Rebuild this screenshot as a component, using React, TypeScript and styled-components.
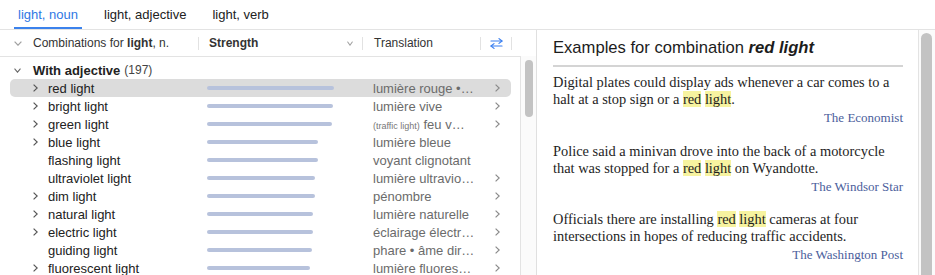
import React from 'react';
import styled, { createGlobalStyle } from 'styled-components';

const GlobalStyle = createGlobalStyle`
  html, body {
    margin: 0;
    padding: 0;
    background: #fff;
  }
  body {
    font-family: 'Liberation Sans', Arial, sans-serif;
    color: #222;
  }
  * {
    box-sizing: border-box;
  }
`;

const Page = styled.div`
  width: 935px;
  height: 275px;
  overflow: hidden;
  display: flex;
  flex-direction: column;
`;

const TabBar = styled.nav`
  flex: none;
  height: 30px;
  display: flex;
  gap: 18px;
  padding-left: 14px;
  border-bottom: 1px solid #e3e3e3;
`;

const Tab = styled.div<{ $active?: boolean }>`
  height: 29px;
  padding: 2px 4px 0;
  display: flex;
  align-items: center;
  font-size: 13px;
  color: ${props => (props.$active ? '#2f78e4' : '#222')};
  border-bottom: 2px solid ${props => (props.$active ? '#3b82ec' : 'transparent')};
`;

const Main = styled.div`
  flex: 1;
  min-height: 0;
  display: flex;
`;

const LeftPanel = styled.section`
  width: 537px;
  flex: none;
  display: flex;
  flex-direction: column;
  border-right: 1px solid #e0e0e0;
`;

const Header = styled.div`
  height: 26px;
  flex: none;
  display: flex;
  align-items: center;
  font-size: 12px;
  color: #333;
`;

const HeaderCell = styled.div<{ $width: number; $pad: number }>`
  width: ${props => props.$width}px;
  padding-left: ${props => props.$pad}px;
  display: flex;
  align-items: center;
  white-space: nowrap;
  b {
    font-weight: bold;
  }
`;

const Divider = styled.div`
  width: 1px;
  height: 13px;
  flex: none;
  background: #e2e2e2;
`;

const Spacer = styled.div`
  flex: 1;
`;

const FaintIcon = styled.span<{ $gap?: number }>`
  display: inline-flex;
  color: #a0a0a0;
  margin-right: ${props => props.$gap ?? 0}px;
`;

const SwapCell = styled.div`
  width: 30px;
  display: flex;
  justify-content: center;
  color: #3a7ff0;
`;

const Body = styled.div`
  flex: 1;
  min-height: 0;
  display: flex;
`;

const List = styled.div`
  width: 521px;
  flex: none;
  padding-top: 4px;
  border-top: 1px solid #e3e3e3;
  border-right: 1px solid #e3e3e3;
  overflow: hidden;
`;

const ScrollTrack = styled.div<{ $top: number; $left: number }>`
  flex: 1;
  padding: ${props => props.$top}px 0 0 ${props => props.$left}px;
  background: #fbfbfb;
`;

const Thumb = styled.div<{ $width: number; $height: number }>`
  width: ${props => props.$width}px;
  height: ${props => props.$height}px;
  border-radius: ${props => props.$width / 2}px;
  background: #c3c3c3;
`;

const GroupRow = styled.div`
  height: 18px;
  display: flex;
  align-items: center;
  padding-left: 14px;
  font-size: 13px;
  color: #222;
  b {
    font-weight: bold;
  }
  small {
    font-size: 12px;
    color: #444;
    margin-left: 4px;
  }
`;

const GroupIcon = styled.span`
  display: inline-flex;
  width: 19px;
  color: #666;
`;

const Row = styled.div<{ $selected?: boolean }>`
  height: 18px;
  width: 501px;
  margin-left: 10px;
  display: flex;
  align-items: center;
  border-radius: 5px;
  font-size: 13px;
  background: ${props => (props.$selected ? '#dcdcdc' : 'transparent')};
`;

const WordCell = styled.div`
  width: 188px;
  padding-left: 23px;
  display: flex;
  align-items: center;
  color: #222;
  white-space: nowrap;
`;

const ChevronSlot = styled.span`
  width: 15px;
  flex: none;
  display: inline-flex;
  color: #555;
`;

const StrengthCell = styled.div`
  width: 164px;
  padding-left: 9px;
`;

const Bar = styled.div`
  height: 4px;
  border-radius: 2px;
  background: #b7c2dc;
`;

const TranslationCell = styled.div`
  width: 118px;
  padding-left: 11px;
  color: #6b6b6b;
  white-space: nowrap;
  overflow: hidden;
  small {
    font-size: 9px;
    color: #777;
  }
`;

const MoreCell = styled.div`
  width: 31px;
  padding-left: 15px;
  display: flex;
  color: #8a8a8a;
`;

const RightPanel = styled.section`
  flex: 1;
  display: flex;
`;

const Examples = styled.div`
  width: 382px;
  flex: none;
  padding: 8px 15px 0 16px;
  border-right: 1px solid #e3e3e3;
  overflow: hidden;
`;

const Title = styled.h2`
  margin: 0;
  padding-bottom: 7px;
  border-bottom: 2px solid #d4d4d4;
  font-size: 16.6px;
  line-height: 20px;
  font-weight: normal;
  color: #1c1c1c;
  white-space: nowrap;
  em {
    font-weight: bold;
    font-style: italic;
  }
`;

const ExampleList = styled.div`
  display: flex;
  flex-direction: column;
  gap: 16.5px;
  padding-top: 7px;
`;

const Quote = styled.p`
  margin: 0;
  font-family: 'Liberation Serif', 'Times New Roman', serif;
  font-size: 14.4px;
  line-height: 17px;
  color: #1e1e1e;
`;

const Mark = styled.span`
  background: #f7f3a0;
`;

const Source = styled.div`
  margin-top: 1px;
  text-align: right;
  font-family: 'Liberation Serif', 'Times New Roman', serif;
  font-size: 13px;
  line-height: 17px;
  color: #4b5e9c;
`;

const ChevronDown = ({ w = 8 }: { w?: number }) => (
  <svg width={w} height={5} viewBox="0 0 8 5" preserveAspectRatio="none">
    <polyline points="0.6,0.6 4,4.2 7.4,0.6" fill="none" stroke="currentColor" strokeWidth="1.2" />
  </svg>
);

const ChevronRight = () => (
  <svg width={5} height={8} viewBox="0 0 5 8">
    <polyline points="0.6,0.6 4.2,4 0.6,7.4" fill="none" stroke="currentColor" strokeWidth="1.2" />
  </svg>
);

const SwapIcon = () => (
  <svg width={13} height={11} viewBox="0 0 13 11">
    <g fill="none" stroke="currentColor" strokeWidth="1.2" strokeLinecap="round" strokeLinejoin="round">
      <line x1="1" y1="3" x2="12" y2="3" />
      <polyline points="9,0.6 12,3 9,5.4" />
      <line x1="1" y1="8" x2="12" y2="8" />
      <polyline points="4,5.6 1,8 4,10.4" />
    </g>
  </svg>
);

type Combination = {
  word: string;
  strength: number;
  translation: React.ReactNode;
  expandable: boolean;
  more: boolean;
};

const combinations: Combination[] = [
  { word: 'red light', strength: 127, translation: 'lumière rouge •…', expandable: true, more: true },
  { word: 'bright light', strength: 126, translation: 'lumière vive', expandable: true, more: true },
  {
    word: 'green light',
    strength: 125,
    translation: (
      <>
        <small>(traffic light)</small> feu v…
      </>
    ),
    expandable: true,
    more: true,
  },
  { word: 'blue light', strength: 111, translation: 'lumière bleue', expandable: true, more: false },
  { word: 'flashing light', strength: 111, translation: 'voyant clignotant', expandable: false, more: false },
  { word: 'ultraviolet light', strength: 108, translation: 'lumière ultravio…', expandable: false, more: true },
  { word: 'dim light', strength: 108, translation: 'pénombre', expandable: true, more: true },
  { word: 'natural light', strength: 106, translation: 'lumière naturelle', expandable: true, more: true },
  { word: 'electric light', strength: 106, translation: 'éclairage électr…', expandable: true, more: true },
  { word: 'guiding light', strength: 105, translation: 'phare • âme dir…', expandable: false, more: true },
  { word: 'fluorescent light', strength: 103, translation: 'lumière fluores…', expandable: true, more: true },
];

const Highlight = () => (
  <>
    <Mark>red</Mark> <Mark>light</Mark>
  </>
);

const examples = [
  {
    before: 'Digital plates could display ads whenever a car comes to a halt at a stop sign or a ',
    after: '.',
    source: 'The Economist',
  },
  {
    before: 'Police said a minivan drove into the back of a motorcycle that was stopped for a ',
    after: ' on Wyandotte.',
    source: 'The Windsor Star',
  },
  {
    before: 'Officials there are installing ',
    after: ' cameras at four intersections in hopes of reducing traffic accidents.',
    source: 'The Washington Post',
  },
];

const App: React.FC = () => {
  return (
    <Page>
      <GlobalStyle />
      <TabBar>
        <Tab $active>light, noun</Tab>
        <Tab>light, adjective</Tab>
        <Tab>light, verb</Tab>
      </TabBar>
      <Main>
        <LeftPanel>
          <Header>
            <HeaderCell $width={198} $pad={14}>
              <FaintIcon $gap={11}>
                <ChevronDown />
              </FaintIcon>
              Combinations for&nbsp;<b>light</b>, n.
            </HeaderCell>
            <Divider />
            <HeaderCell $width={163} $pad={10}>
              <b>Strength</b>
              <Spacer />
              <FaintIcon $gap={9}>
                <ChevronDown w={6} />
              </FaintIcon>
            </HeaderCell>
            <Divider />
            <HeaderCell $width={117} $pad={11}>
              Translation
            </HeaderCell>
            <Divider />
            <SwapCell>
              <SwapIcon />
            </SwapCell>
            <Divider />
          </Header>
          <Body>
            <List>
              <GroupRow>
                <GroupIcon>
                  <ChevronDown w={7} />
                </GroupIcon>
                <b>With adjective</b>
                <small>(197)</small>
              </GroupRow>
              {combinations.map((c, i) => (
                <Row key={c.word} $selected={i === 0}>
                  <WordCell>
                    <ChevronSlot>{c.expandable && <ChevronRight />}</ChevronSlot>
                    {c.word}
                  </WordCell>
                  <StrengthCell>
                    <Bar style={{ width: c.strength }} />
                  </StrengthCell>
                  <TranslationCell>{c.translation}</TranslationCell>
                  <MoreCell>{c.more && <ChevronRight />}</MoreCell>
                </Row>
              ))}
            </List>
            <ScrollTrack $top={4} $left={4}>
              <Thumb $width={8} $height={57} />
            </ScrollTrack>
          </Body>
        </LeftPanel>
        <RightPanel>
          <Examples>
            <Title>
              Examples for combination <em>red light</em>
            </Title>
            <ExampleList>
              {examples.map(ex => (
                <div key={ex.source}>
                  <Quote>
                    {ex.before}
                    <Highlight />
                    {ex.after}
                  </Quote>
                  <Source>{ex.source}</Source>
                </div>
              ))}
            </ExampleList>
          </Examples>
          <ScrollTrack $top={3} $left={2}>
            <Thumb $width={11} $height={260} />
          </ScrollTrack>
        </RightPanel>
      </Main>
    </Page>
  );
};

export default App;
